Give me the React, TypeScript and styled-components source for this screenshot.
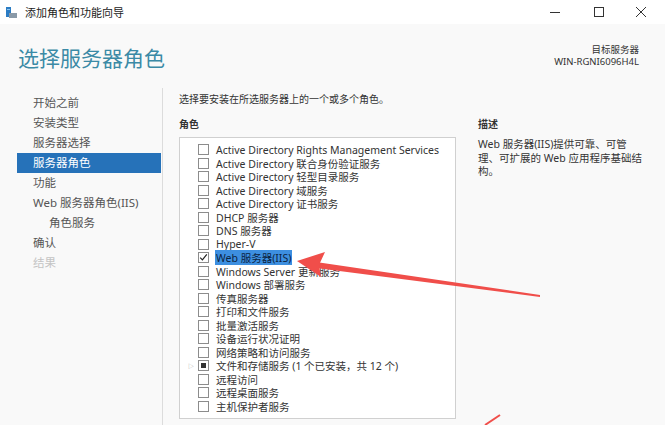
import React from 'react';
import styled, { createGlobalStyle } from 'styled-components';

const GlobalStyle = createGlobalStyle`
  html, body {
    margin: 0;
    padding: 0;
    background: #f9f9f9;
  }
  body {
    font-family: 'Noto Sans', 'Noto Sans CJK SC', sans-serif;
    color: #333;
  }
`;

const Window = styled.div`
  position: relative;
  width: 665px;
  height: 425px;
  display: flex;
  flex-direction: column;
  background: #f9f9f9;
  overflow: hidden;
`;

const TitleBar = styled.div`
  height: 24px;
  flex: none;
  display: flex;
  align-items: center;
  background: #fff;
  padding-left: 6px;
  font-size: 11px;
  color: #222;
`;

const TitleText = styled.span`
  margin-left: 8px;
  flex: 1;
`;

const Controls = styled.div`
  display: flex;
  align-items: center;
  height: 100%;
`;

const ControlButton = styled.div<{ $width: number }>`
  width: ${p => p.$width}px;
  height: 100%;
  display: flex;
  align-items: center;
  justify-content: center;
  color: #333;
`;

const Header = styled.div`
  display: flex;
  justify-content: space-between;
  align-items: flex-start;
  padding: 18px 26px 0 18px;
  height: 46px;
  flex: none;
`;

const Heading = styled.h1`
  margin: 0;
  font-size: 21px;
  line-height: 32px;
  font-weight: 400;
  color: #3b8aa6;
`;

const Target = styled.div`
  text-align: right;
  font-size: 9.5px;
  line-height: 12px;
  color: #333;
  padding-top: 2px;
`;

const Main = styled.div`
  flex: 1;
  display: flex;
  min-height: 0;
`;

const Nav = styled.nav`
  margin-left: 17px;
  width: 146px;
  padding-top: 5px;
  border-right: 1px solid #dcdcdc;
  box-sizing: border-box;
  padding-right: 1px;
`;

const NavItem = styled.div<{ $active?: boolean; $disabled?: boolean; $indent?: boolean }>`
  height: 20px;
  line-height: 20px;
  font-size: 11.5px;
  padding-left: ${p => (p.$indent ? 32 : 16)}px;
  background: ${p => (p.$active ? '#2672b9' : 'transparent')};
  color: ${p => (p.$active ? '#fff' : p.$disabled ? '#c4c4c4' : '#555')};
`;

const Content = styled.div`
  flex: 1;
  display: grid;
  grid-template-columns: 277px 1fr;
  grid-template-rows: auto auto 1fr;
  column-gap: 22px;
  padding: 4px 22px 6px 16px;
`;

const Intro = styled.div`
  grid-column: 1 / span 2;
  font-size: 10px;
  line-height: 14px;
  color: #333;
`;

const Label = styled.div`
  margin-top: 11px;
  margin-bottom: 6px;
  font-size: 10px;
  line-height: 14px;
  font-weight: 700;
  color: #333;
`;

const ListBox = styled.div`
  background: #fff;
  border: 1px solid #d0d0d0;
  padding: 5px 0 0 8px;
  box-sizing: border-box;
`;

const Row = styled.div`
  display: flex;
  align-items: center;
  height: 13.5px;
  font-size: 10.5px;
  color: #333;
  white-space: nowrap;
`;

const Expander = styled.span`
  width: 10px;
  flex: none;
  font-size: 6px;
  color: #999;
`;

const Box = styled.span<{ $state: 'off' | 'on' | 'partial' }>`
  position: relative;
  width: 11px;
  height: 11px;
  flex: none;
  border: 1px solid #8c8c8c;
  background: #fff;
  margin-right: 6px;
  box-sizing: border-box;
  &::after {
    content: '';
    display: ${p => (p.$state === 'partial' ? 'block' : 'none')};
    position: absolute;
    inset: 2px;
    background: #333;
  }
`;

const RowText = styled.span<{ $selected?: boolean }>`
  padding: 0 1px;
  background: ${p => (p.$selected ? '#3d8fe0' : 'transparent')};
  color: ${p => (p.$selected ? '#0b2340' : '#333')};
`;

const Description = styled.div`
  font-size: 10.5px;
  line-height: 13.5px;
  color: #333;
  padding-top: 1px;
`;

const Overlay = styled.svg`
  position: absolute;
  left: 0;
  top: 0;
  pointer-events: none;
`;

type Role = { name: string; state?: 'off' | 'on' | 'partial'; selected?: boolean; expandable?: boolean };

const roles: Role[] = [
  { name: 'Active Directory Rights Management Services' },
  { name: 'Active Directory 联合身份验证服务' },
  { name: 'Active Directory 轻型目录服务' },
  { name: 'Active Directory 域服务' },
  { name: 'Active Directory 证书服务' },
  { name: 'DHCP 服务器' },
  { name: 'DNS 服务器' },
  { name: 'Hyper-V' },
  { name: 'Web 服务器(IIS)', state: 'on', selected: true },
  { name: 'Windows Server 更新服务' },
  { name: 'Windows 部署服务' },
  { name: '传真服务器' },
  { name: '打印和文件服务' },
  { name: '批量激活服务' },
  { name: '设备运行状况证明' },
  { name: '网络策略和访问服务' },
  { name: '文件和存储服务 (1 个已安装，共 12 个)', state: 'partial', expandable: true },
  { name: '远程访问' },
  { name: '远程桌面服务' },
  { name: '主机保护者服务' },
];

function AppIcon() {
  return (
    <svg width="11" height="11" viewBox="0 0 11 11">
      <rect x="0" y="0" width="5" height="10" fill="#2b7cc4" />
      <rect x="1" y="2" width="3" height="1" fill="#8cc4ee" />
      <rect x="3" y="6" width="8" height="5" fill="#8a9aa8" />
    </svg>
  );
}

function Check({ state }: { state: 'off' | 'on' | 'partial' }) {
  return (
    <Box $state={state}>
      {state === 'on' && (
        <svg width="9" height="9" viewBox="0 0 9 9" style={{ position: 'absolute', left: 0, top: 0 }}>
          <path d="M1.2 4.6 L3.4 6.8 L7.8 1.4" stroke="#222" strokeWidth="1.2" fill="none" />
        </svg>
      )}
    </Box>
  );
}

export default function App(): JSX.Element {
  return (
    <Window>
      <GlobalStyle />
      <TitleBar>
        <AppIcon />
        <TitleText>添加角色和功能向导</TitleText>
        <Controls>
          <ControlButton $width={51}>
            <svg width="10" height="10" viewBox="0 0 10 10">
              <line x1="0" y1="5.5" x2="10" y2="5.5" stroke="#333" strokeWidth="1" />
            </svg>
          </ControlButton>
          <ControlButton $width={37}>
            <svg width="10" height="10" viewBox="0 0 10 10">
              <rect x="0.5" y="0.5" width="9" height="9" stroke="#333" strokeWidth="1" fill="none" />
            </svg>
          </ControlButton>
          <ControlButton $width={48}>
            <svg width="10" height="10" viewBox="0 0 10 10">
              <path d="M0 0 L10 10 M10 0 L0 10" stroke="#333" strokeWidth="1" />
            </svg>
          </ControlButton>
        </Controls>
      </TitleBar>

      <Header>
        <Heading>选择服务器角色</Heading>
        <Target>
          <div>目标服务器</div>
          <div>WIN-RGNI6096H4L</div>
        </Target>
      </Header>

      <Main>
        <Nav>
          <NavItem>开始之前</NavItem>
          <NavItem>安装类型</NavItem>
          <NavItem>服务器选择</NavItem>
          <NavItem $active>服务器角色</NavItem>
          <NavItem>功能</NavItem>
          <NavItem>Web 服务器角色(IIS)</NavItem>
          <NavItem $indent>角色服务</NavItem>
          <NavItem>确认</NavItem>
          <NavItem $disabled>结果</NavItem>
        </Nav>

        <Content>
          <Intro>选择要安装在所选服务器上的一个或多个角色。</Intro>
          <Label>角色</Label>
          <Label>描述</Label>
          <ListBox>
            {roles.map(r => (
              <Row key={r.name}>
                <Expander>{r.expandable ? '▷' : ''}</Expander>
                <Check state={r.state ?? 'off'} />
                <RowText $selected={r.selected}>{r.name}</RowText>
              </Row>
            ))}
          </ListBox>
          <Description>
            Web 服务器(IIS)提供可靠、可管理、可扩展的 Web 应用程序基础结构。
          </Description>
        </Content>
      </Main>

      <Overlay width="665" height="425" viewBox="0 0 665 425">
        <polygon points="316,262 316,268 540,297 540,295" fill="#f04e4a" />
        <polygon points="297,261 325,252 319,265 321,277" fill="#f04e4a" />
        <line x1="485" y1="425" x2="500" y2="415" stroke="#f04e4a" strokeWidth="2" />
      </Overlay>
    </Window>
  );
}
